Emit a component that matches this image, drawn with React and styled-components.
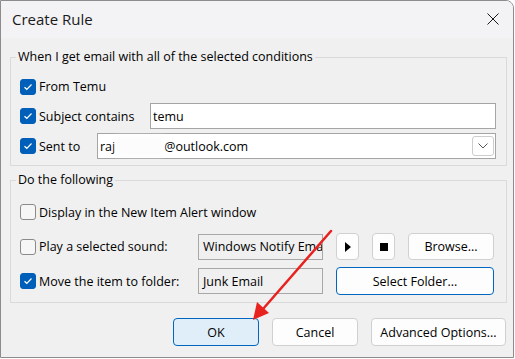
import React from "react";
import styled, { createGlobalStyle } from "styled-components";

const Global = createGlobalStyle`
  html, body { margin: 0; padding: 0; background: #ffffff; }
  body { font-family: "Open Sans", "Noto Sans", sans-serif; font-size: 12.5px; color: #000; }
  * { box-sizing: border-box; }
`;

const Window = styled.div`
  position: relative;
  width: 514px;
  height: 358px;
  border: 1px solid #8c8c8c;
  border-top-right-radius: 8px;
  background: #f0f0f0;
  overflow: hidden;
  display: flex;
  flex-direction: column;
`;

const TitleBar = styled.div`
  height: 37px;
  flex: none;
  background: #f3f2f4;
  display: flex;
  align-items: center;
  justify-content: space-between;
  padding: 0 14px 2px 11px;
`;

const Title = styled.div`
  font-size: 15px;
  color: #1a1a1a;
`;

const CloseIcon = styled.svg`
  width: 12px;
  height: 12px;
  display: block;
`;

const Body = styled.div`
  padding: 11px 6px 0 9px;
  display: flex;
  flex-direction: column;
`;

const Group = styled.fieldset`
  margin: 0 0 ${(p) => p.$mb || 0}px 0;
  padding: ${(p) => p.$pt}px 10px ${(p) => p.$pb}px 9px;
  border: 1px solid #dadada;
  min-width: 0;
  display: flex;
  flex-direction: column;
  gap: ${(p) => p.$gap}px;
`;

const Legend = styled.legend`
  padding: 0 2px;
  margin-left: -4px;
  line-height: 16px;
  color: #000;
`;

const Row = styled.div`
  height: ${(p) => p.$h || 26}px;
  display: flex;
  align-items: center;
`;

const CheckLabel = styled.label`
  display: flex;
  align-items: center;
  gap: 3px;
  width: ${(p) => (p.$w ? `${p.$w}px` : "auto")};
  flex: none;
  white-space: nowrap;
`;

const Box = styled.span`
  width: 16px;
  height: 16px;
  border-radius: 3px;
  flex: none;
  display: flex;
  align-items: center;
  justify-content: center;
  background: ${(p) => (p.$checked ? "#005fb8" : "#f6f6f6")};
  border: 1px solid ${(p) => (p.$checked ? "#005fb8" : "#8a8a8a")};
`;

const Check = ({ checked, label, width }) => (
  <CheckLabel $w={width}>
    <Box $checked={checked}>
      {checked && (
        <svg width="10" height="8" viewBox="0 0 10 8">
          <path d="M1.5 4.2 L3.8 6.3 L8.5 1.5" fill="none" stroke="#fff" strokeWidth="1.2" />
        </svg>
      )}
    </Box>
    <span>{label}</span>
  </CheckLabel>
);

const TextField = styled.div`
  flex: 1;
  height: 26px;
  background: #fff;
  border: 1px solid #a5a5a5;
  display: flex;
  align-items: center;
  padding: 0 2px;
  position: relative;
`;

const Blur = styled.span`
  display: inline-block;
  width: 47px;
  height: 20px;
  background: #fcfcfc;
  filter: blur(2px);
  margin: 0 1px;
`;

const DropButton = styled.div`
  position: absolute;
  right: 1px;
  top: 2px;
  width: 22px;
  height: 20px;
  border: 1px solid #cdcdcd;
  border-radius: 3px;
  background: #fff;
  display: flex;
  align-items: center;
  justify-content: center;
`;

const ActionGrid = styled.div`
  display: grid;
  grid-template-columns: 165px 125px 23px 23px 86px;
  column-gap: 13px;
  height: 26px;
  align-items: center;
`;

const ReadField = styled.div`
  height: 26px;
  border: 1px solid #a8a8a8;
  background: #f0f0f0;
  display: flex;
  align-items: center;
  padding: 0 4px;
  white-space: nowrap;
  overflow: hidden;
`;

const Button = styled.div`
  height: ${(p) => p.$h || 28}px;
  width: ${(p) => (p.$w ? `${p.$w}px` : "auto")};
  grid-column: ${(p) => p.$span || "auto"};
  border: 1px solid ${(p) => (p.$accent ? "#0067c0" : "#d0d0d0")};
  background: ${(p) => (p.$primary ? "#e0eef9" : "#fdfdfd")};
  border-radius: 4px;
  display: flex;
  align-items: center;
  justify-content: center;
  white-space: nowrap;
  color: #000;
`;

const Footer = styled.div`
  display: flex;
  justify-content: flex-end;
  gap: 13px;
  margin-top: 15px;
  padding-right: 1px;
`;

const Arrow = styled.svg`
  position: absolute;
  left: 0;
  top: 0;
  pointer-events: none;
`;

export default function App() {
  return (
    <>
      <Global />
      <Window>
        <TitleBar>
          <Title>Create Rule</Title>
          <CloseIcon viewBox="0 0 12 12">
            <path d="M0.5 0.5 L11.5 11.5 M11.5 0.5 L0.5 11.5" stroke="#1a1a1a" strokeWidth="1" />
          </CloseIcon>
        </TitleBar>
        <Body>
          <Group $pt={9} $pb={6} $gap={4} $mb={6}>
            <Legend>When I get email with all of the selected conditions</Legend>
            <Row $h={25}>
              <Check checked label="From Temu" />
            </Row>
            <Row>
              <Check checked label="Subject contains" width={130} />
              <TextField>temu</TextField>
            </Row>
            <Row>
              <Check checked label="Sent to" width={77} />
              <TextField>
                raj<Blur />@outlook.com
                <DropButton>
                  <svg width="10" height="6" viewBox="0 0 10 6">
                    <path d="M0.5 0.5 L5 5 L9.5 0.5" fill="none" stroke="#555" strokeWidth="1" />
                  </svg>
                </DropButton>
              </TextField>
            </Row>
          </Group>
          <Group $pt={11} $pb={9} $gap={8}>
            <Legend>Do the following</Legend>
            <Row>
              <Check label="Display in the New Item Alert window" />
            </Row>
            <ActionGrid>
              <Check label="Play a selected sound:" />
              <ReadField>Windows Notify Email</ReadField>
              <Button $h={27}>
                <svg width="6" height="10" viewBox="0 0 6 10">
                  <path d="M0 0 L6 5 L0 10 Z" fill="#000" />
                </svg>
              </Button>
              <Button $h={27}>
                <svg width="8" height="8" viewBox="0 0 8 8">
                  <rect width="8" height="8" fill="#000" />
                </svg>
              </Button>
              <Button $h={27}>Browse...</Button>
            </ActionGrid>
            <ActionGrid>
              <Check checked label="Move the item to folder:" />
              <ReadField>Junk Email</ReadField>
              <Button $span="3 / 6" $accent>Select Folder...</Button>
            </ActionGrid>
          </Group>
          <Footer>
            <Button $w={86} $accent $primary>OK</Button>
            <Button $w={86}>Cancel</Button>
            <Button $w={135}>Advanced Options...</Button>
          </Footer>
        </Body>
        <Arrow width="514" height="358" viewBox="0 0 514 358">
          <line x1="330" y1="230" x2="262" y2="308" stroke="#e8231f" strokeWidth="2.5" strokeLinecap="round" />
          <path d="M252 319 L256 301 L268 312 Z" fill="#e8231f" />
        </Arrow>
      </Window>
    </>
  );
}
